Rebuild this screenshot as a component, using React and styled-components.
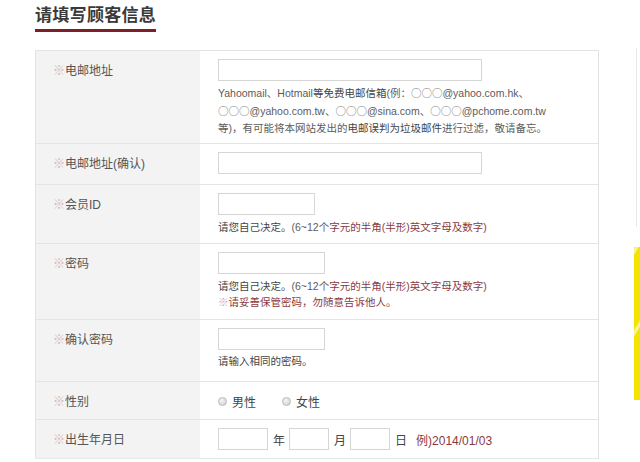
import React from "react"
import styled, { createGlobalStyle } from "styled-components"

const GlobalStyle = createGlobalStyle`
  html, body {
    margin: 0;
    padding: 0;
    background: #ffffff;
  }
  body {
    font-family: "Liberation Sans", "Noto Sans CJK SC", sans-serif;
    color: #555;
  }
`

const Page = styled.div`
  display: flex;
  width: 640px;
  height: 462px;
  overflow: hidden;
`

const Main = styled.div`
  width: 564px;
  padding-left: 35px;
`

const Heading = styled.div`
  padding-top: 4px;
  height: 50px;
  box-sizing: border-box;
`

const Title = styled.h2`
  display: inline-block;
  margin: 0;
  padding-bottom: 5px;
  font-family: "Noto Sans CJK SC", sans-serif;
  font-size: 17px;
  line-height: 20px;
  font-weight: 700;
  color: #3a3a3a;
  letter-spacing: 0.3px;
  border-bottom: 3px solid #7d1f26;
`

const Table = styled.div`
  border: 1px solid #e3e3e3;
  border-bottom-color: #e8e8e8;
`

const Row = styled.div`
  display: grid;
  grid-template-columns: 164px 1fr;
  height: ${({ $h }) => $h}px;
  box-sizing: border-box;
  & + & {
    border-top: 1px solid #e4e4e4;
  }
`

const Label = styled.div`
  background: #f3f3f3;
  padding: 9px 0 0 17px;
  font-size: 12px;
  line-height: 20px;
  color: #555;
`

const Mark = styled.span`
  font-family: "Noto Sans CJK SC", sans-serif;
  color: ${({ $red }) => ($red ? "#c9a2a2" : "#d2b4b4")};
  font-size: ${({ $small }) => ($small ? 10.5 : 12)}px;
`

const Value = styled.div`
  padding: 8px 0 0 18px;
  font-size: 12px;
  color: #555;
`

const Input = styled.div`
  width: ${({ $w }) => $w}px;
  height: 22px;
  box-sizing: border-box;
  border: 1px solid #d6d6d6;
  background: #fff;
`

const Help = styled.div`
  margin-top: ${({ $mt }) => $mt ?? 4}px;
  font-size: 10.5px;
  line-height: ${({ $lh }) => $lh ?? 17}px;
  color: #5c5c5c;
  white-space: nowrap;
`

const Wide = styled.span`
  font-family: "Noto Sans CJK SC", sans-serif;
  color: #777;
`

const Dark = styled.span`
  color: #444;
`

const Warn = styled.span`
  color: #8a3a3f;
`

const Inline = styled.div`
  display: flex;
  align-items: center;
  height: 22px;
`

const Radio = styled.label`
  display: flex;
  align-items: center;
  gap: 5px;
  margin-right: 26px;
  font-size: 12px;
  color: #444;
  font-family: "Noto Sans CJK SC", sans-serif;
`

const Dot = styled.span`
  width: 9px;
  height: 9px;
  border-radius: 50%;
  box-sizing: border-box;
  border: 1px solid #b9b9b9;
  background: radial-gradient(circle at 40% 35%, #f4f4f4, #cfcfcf);
`

const Unit = styled.span`
  margin: 0 4px 0 5px;
  font-size: 12px;
  color: #444;
  font-family: "Noto Sans CJK SC", sans-serif;
`

const Example = styled.span`
  margin-left: 5px;
  font-size: 12px;
  color: #8a3a3f;
`

const Side = styled.div`
  margin-left: 33px;
  width: 8px;
  display: flex;
  flex-direction: column;
`

const SideLine = styled.div`
  margin-top: 48px;
  margin-left: 4px;
  height: 179px;
  border-left: 1px solid #e6e6e6;
`

const SideBadge = styled.div`
  margin-top: 20px;
  margin-left: 2px;
  height: 153px;
  background: repeating-linear-gradient(
    -60deg,
    #f3e400 0px,
    #f3e400 36px,
    #fbf6c0 38px,
    #f3e400 41px
  );
`

const O3 = () => <Wide>○○○</Wide>

export default function App() {
  return (
    <>
      <GlobalStyle />
      <Page>
        <Main>
          <Heading>
            <Title>请填写顾客信息</Title>
          </Heading>
          <Table>
            <Row $h={92}>
              <Label>
                <Mark>※</Mark>电邮地址
              </Label>
              <Value>
                <Input $w={264} />
                <Help $mt={3}>
                  Yahoomail、Hotmail<Dark>等免费电邮信箱</Dark>(例：<O3 />@yahoo.com.hk、
                  <br />
                  <O3 />@yahoo.com.tw、<O3 />@sina.com、<O3 />@pchome.com.tw
                  <br />
                  等)，有可能将本网站发出的<Dark>电邮误判为垃圾邮件</Dark>进行过滤，敬请备忘。
                </Help>
              </Value>
            </Row>
            <Row $h={41}>
              <Label>
                <Mark>※</Mark>电邮地址(确认)
              </Label>
              <Value>
                <Input $w={264} />
              </Value>
            </Row>
            <Row $h={59}>
              <Label>
                <Mark>※</Mark>会员ID
              </Label>
              <Value>
                <Input $w={97} />
                <Help>
                  <Dark>请您自己决定。</Dark>(6~12个<Warn>字元的半角(半形)英文字母及数字)</Warn>
                </Help>
              </Value>
            </Row>
            <Row $h={76}>
              <Label>
                <Mark>※</Mark>密码
              </Label>
              <Value>
                <Input $w={107} />
                <Help $lh={15} $mt={5}>
                  <Dark>请您自己决定。</Dark>(6~12个<Warn>字元的半角(半形)英文字母及数字)</Warn>
                  <br />
                  <Mark $red $small>※</Mark>
                  <Warn>请妥善保管密码，勿随意告诉他人。</Warn>
                </Help>
              </Value>
            </Row>
            <Row $h={62}>
              <Label>
                <Mark>※</Mark>确认密码
              </Label>
              <Value>
                <Input $w={107} />
                <Help $mt={3}>
                  <Dark>请输入相同的密码。</Dark>
                </Help>
              </Value>
            </Row>
            <Row $h={38}>
              <Label>
                <Mark>※</Mark>性别
              </Label>
              <Value>
                <Inline>
                  <Radio>
                    <Dot />
                    男性
                  </Radio>
                  <Radio>
                    <Dot />
                    女性
                  </Radio>
                </Inline>
              </Value>
            </Row>
            <Row $h={39}>
              <Label>
                <Mark>※</Mark>出生年月日
              </Label>
              <Value>
                <Inline>
                  <Input $w={50} />
                  <Unit>年</Unit>
                  <Input $w={40} />
                  <Unit>月</Unit>
                  <Input $w={40} />
                  <Unit>日</Unit>
                  <Example>例)2014/01/03</Example>
                </Inline>
              </Value>
            </Row>
          </Table>
        </Main>
        <Side>
          <SideLine />
          <SideBadge />
        </Side>
      </Page>
    </>
  )
}
